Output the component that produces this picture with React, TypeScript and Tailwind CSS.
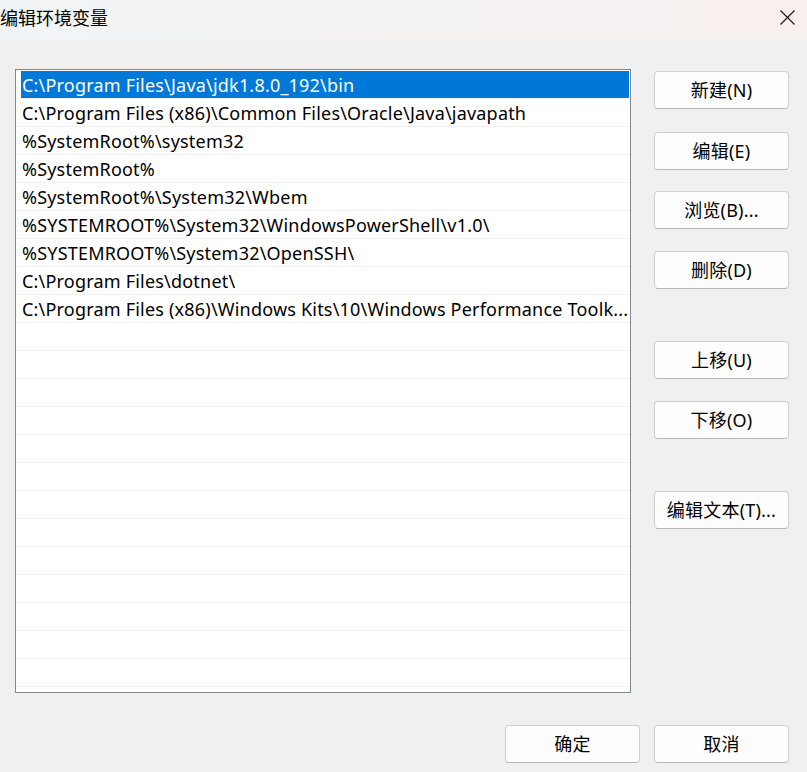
import React from "react";

const rows = [
  "C:\\Program Files\\Java\\jdk1.8.0_192\\bin",
  "C:\\Program Files (x86)\\Common Files\\Oracle\\Java\\javapath",
  "%SystemRoot%\\system32",
  "%SystemRoot%",
  "%SystemRoot%\\System32\\Wbem",
  "%SYSTEMROOT%\\System32\\WindowsPowerShell\\v1.0\\",
  "%SYSTEMROOT%\\System32\\OpenSSH\\",
  "C:\\Program Files\\dotnet\\",
  "C:\\Program Files (x86)\\Windows Kits\\10\\Windows Performance Toolk...",
];

function Btn({ label, className = "" }: { label: string; className?: string }) {
  return (
    <div
      className={
        "w-[135px] h-[38px] rounded-[4px] border border-[#d0d0d0] border-b-[#b8b8b8] bg-[#fdfdfd] flex items-center justify-center text-[18px] tracking-[0.2px] text-black " +
        className
      }
    >
      {label}
    </div>
  );
}

export default function App() {
  const all = [...rows, ...Array(13).fill("")];
  return (
    <div
      className="w-[807px] h-[772px] bg-[#f0f0f0] overflow-hidden flex flex-col"
      style={{ fontFamily: '"Noto Sans", "Noto Sans CJK SC", sans-serif' }}
    >
      <div className="h-[40px] shrink-0 flex items-center justify-between bg-gradient-to-r from-[#f1f4f5] to-[#f8f0ef]">
        <span className="text-[18px] text-black leading-none -mt-[6px]" style={{ fontFamily: '"Noto Sans CJK SC", sans-serif' }}>
          编辑环境变量
        </span>
        <svg width="15" height="15" viewBox="0 0 15 15" className="mr-[12px] -mt-[5px]">
          <path d="M0.5 0.5 L14.5 14.5 M14.5 0.5 L0.5 14.5" stroke="#1a1a1a" strokeWidth="1.2" fill="none" />
        </svg>
      </div>
      <div className="flex pl-[15px] pt-[29px]">
        <div className="w-[616px] h-[624px] border border-[#828790] bg-white overflow-hidden pt-[1px]">
          {all.map((r, i) => (
            <div key={i} className="h-[28px] border-b border-[#f0f0f0] flex pl-[5px] pr-[1px] overflow-hidden">
              <div
                className={
                  "flex-1 min-w-0 flex items-center pl-[1px] pt-[1px] text-[18px] tracking-[0.2px] whitespace-nowrap overflow-hidden " +
                  (i === 0 ? "bg-[#0078d7] text-white -mb-[1px] h-[28px]" : "text-black")
                }
              >
                <span className="block min-w-0 overflow-hidden whitespace-nowrap">{r}</span>
              </div>
            </div>
          ))}
        </div>
        <div className="ml-[23px] flex flex-col pt-[2px]">
          <Btn label="新建(N)" />
          <Btn label="编辑(E)" className="mt-[23px]" />
          <Btn label="浏览(B)..." className="mt-[21px]" />
          <Btn label="删除(D)" className="mt-[22px]" />
          <Btn label="上移(U)" className="mt-[52px]" />
          <Btn label="下移(O)" className="mt-[22px]" />
          <Btn label="编辑文本(T)..." className="mt-[52px]" />
        </div>
      </div>
      <div className="flex justify-end gap-[14px] pr-[18px] mt-[32px]">
        <Btn label="确定" />
        <Btn label="取消" />
      </div>
    </div>
  );
}
